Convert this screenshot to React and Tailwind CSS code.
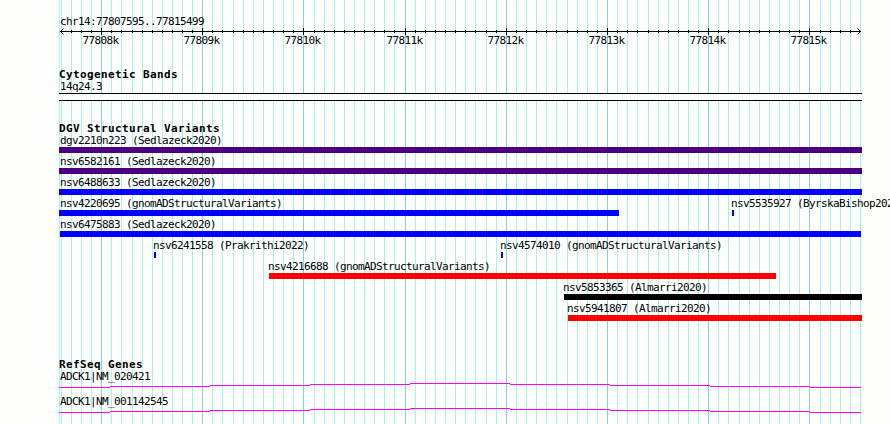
import React from 'react';

const LEFT = 59;
const RIGHT = 862;

// Grid line indexes where rounding to whole pixels makes the step 11px instead of 10px
const WIDE_STEPS = [7, 17, 25, 34, 42, 50, 58, 67, 75];

const GRID = Array.from({ length: 80 }, (_, i) => ({
  x: 61 + i * 10 + WIDE_STEPS.filter((s) => s <= i).length,
  major: i % 10 === 4,
  label: `${77808 + (i - 4) / 10}k`,
})).filter((line) => line.x <= 860);

const VARIANT_ROWS = [
  [{ name: 'dgv2210n223 (Sedlazeck2020)', start: 59, end: 862, color: 'bg-[#4b0082]' }],
  [{ name: 'nsv6582161 (Sedlazeck2020)', start: 59, end: 862, color: 'bg-[#4b0082]' }],
  [{ name: 'nsv6488633 (Sedlazeck2020)', start: 59, end: 862, color: 'bg-[#0000ff]' }],
  [
    { name: 'nsv4220695 (gnomADStructuralVariants)', start: 59, end: 619, color: 'bg-[#0000ff]' },
    { name: 'nsv5535927 (ByrskaBishop2022)', start: 732, end: 734, color: 'bg-[#0000ff]' },
  ],
  [{ name: 'nsv6475883 (Sedlazeck2020)', start: 60, end: 861, color: 'bg-[#0000ff]' }],
  [
    { name: 'nsv6241558 (Prakrithi2022)', start: 154, end: 156, color: 'bg-[#0000ff]' },
    { name: 'nsv4574010 (gnomADStructuralVariants)', start: 501, end: 503, color: 'bg-[#0000ff]' },
  ],
  [{ name: 'nsv4216688 (gnomADStructuralVariants)', start: 269, end: 776, color: 'bg-[#ff0000]' }],
  [{ name: 'nsv5853365 (Almarri2020)', start: 564, end: 862, color: 'bg-black' }],
  [{ name: 'nsv5941807 (Almarri2020)', start: 568, end: 862, color: 'bg-[#ff0000]' }],
];

const GENES = ['ADCK1|NM_020421', 'ADCK1|NM_001142545'];

// Intron line segments: [from, to, y]
const INTRON = [
  [59, 110, 4],
  [110, 210, 3],
  [210, 310, 2],
  [310, 410, 1],
  [410, 510, 0],
  [510, 610, 1],
  [610, 710, 2],
  [710, 810, 3],
  [810, 861, 4],
];

function Grid() {
  return (
    <svg className="absolute inset-0" width="890" height="424" shapeRendering="crispEdges">
      <rect x={LEFT} y="0" width="1" height="424" fill="#afeeee" />
      {GRID.map((line) => (
        <rect key={line.x} x={line.x} y="0" width="1" height="424" fill={line.major ? '#87ceeb' : '#afeeee'} />
      ))}
    </svg>
  );
}

function Ruler() {
  return (
    <svg className="block h-[21px] w-[890px]" viewBox="0 0 890 21" shapeRendering="crispEdges">
      <rect x="60" y="4" width="801" height="1" />
      {GRID.filter((line) => line.x > 61 && line.x < 860).map((line) => (
        <rect key={line.x} x={line.x} y={line.major ? 1 : 3} width="1" height={line.major ? 7 : 3} />
      ))}
      <path d="M63.5 1.5l-3 3 3 3M857.5 1.5l3 3-3 3" fill="none" stroke="#000" shapeRendering="auto" />
      {GRID.filter((line) => line.major).map((line) => (
        <text key={line.label} x={line.x - 18.5} y="17">
          {line.label}
        </text>
      ))}
    </svg>
  );
}

function TrackTitle({ children }) {
  return (
    <h2 className="ml-[59px] h-[12px] text-[11px] leading-[12px] font-bold tracking-[0.38px]">{children}</h2>
  );
}

function VariantRow({ features }) {
  return (
    <div className="flex h-[21px]">
      {features.map((f, i) => (
        <div
          key={f.name}
          className="shrink-0"
          style={{ marginLeft: f.start - (i ? features[i - 1].end : 0), width: f.end - f.start }}
        >
          {/* Labels start just before their bar, but never left of the panel */}
          <div className="h-[12px] whitespace-nowrap" style={{ textIndent: Math.max(LEFT + 1 - f.start, -1) }}>
            {f.name}
          </div>
          <div className={`h-[6px] ${f.color}`} />
        </div>
      ))}
    </div>
  );
}

function Gene({ name }) {
  return (
    <div className="h-[25px]">
      <div className="ml-[60px] h-[12px]">{name}</div>
      <svg className="block h-[5px] w-[890px]" viewBox="0 0 890 5" shapeRendering="crispEdges">
        {INTRON.map(([from, to, y]) => (
          <rect key={from} x={from} y={y} width={to - from} height="1" fill="#ff00ff" />
        ))}
      </svg>
    </div>
  );
}

export default function App() {
  return (
    <div className="relative h-[424px] w-[890px] overflow-hidden bg-[#fdfffd] font-['DejaVu_Sans_Mono',monospace] text-[11px] leading-[12px] tracking-[-0.62px] text-black">
      <Grid />
      <div className="relative">
        <div className="ml-[60px] h-[27px] pt-[16px]">chr14:77807595..77815499</div>
        <Ruler />

        <section className="pt-[21px]">
          <TrackTitle>Cytogenetic Bands</TrackTitle>
          <div className="ml-[60px] h-[12px]">14q24.3</div>
          <div
            className="ml-[59px] h-[8px] border-y border-black bg-[#fdfffd]"
            style={{ width: RIGHT - LEFT }}
          />
        </section>

        <section className="pt-[22px]">
          <TrackTitle>DGV Structural Variants</TrackTitle>
          {VARIANT_ROWS.map((features) => (
            <VariantRow key={features[0].name} features={features} />
          ))}
        </section>

        <section className="pt-[35px]">
          <TrackTitle>RefSeq Genes</TrackTitle>
          {GENES.map((name) => (
            <Gene key={name} name={name} />
          ))}
        </section>
      </div>
    </div>
  );
}
